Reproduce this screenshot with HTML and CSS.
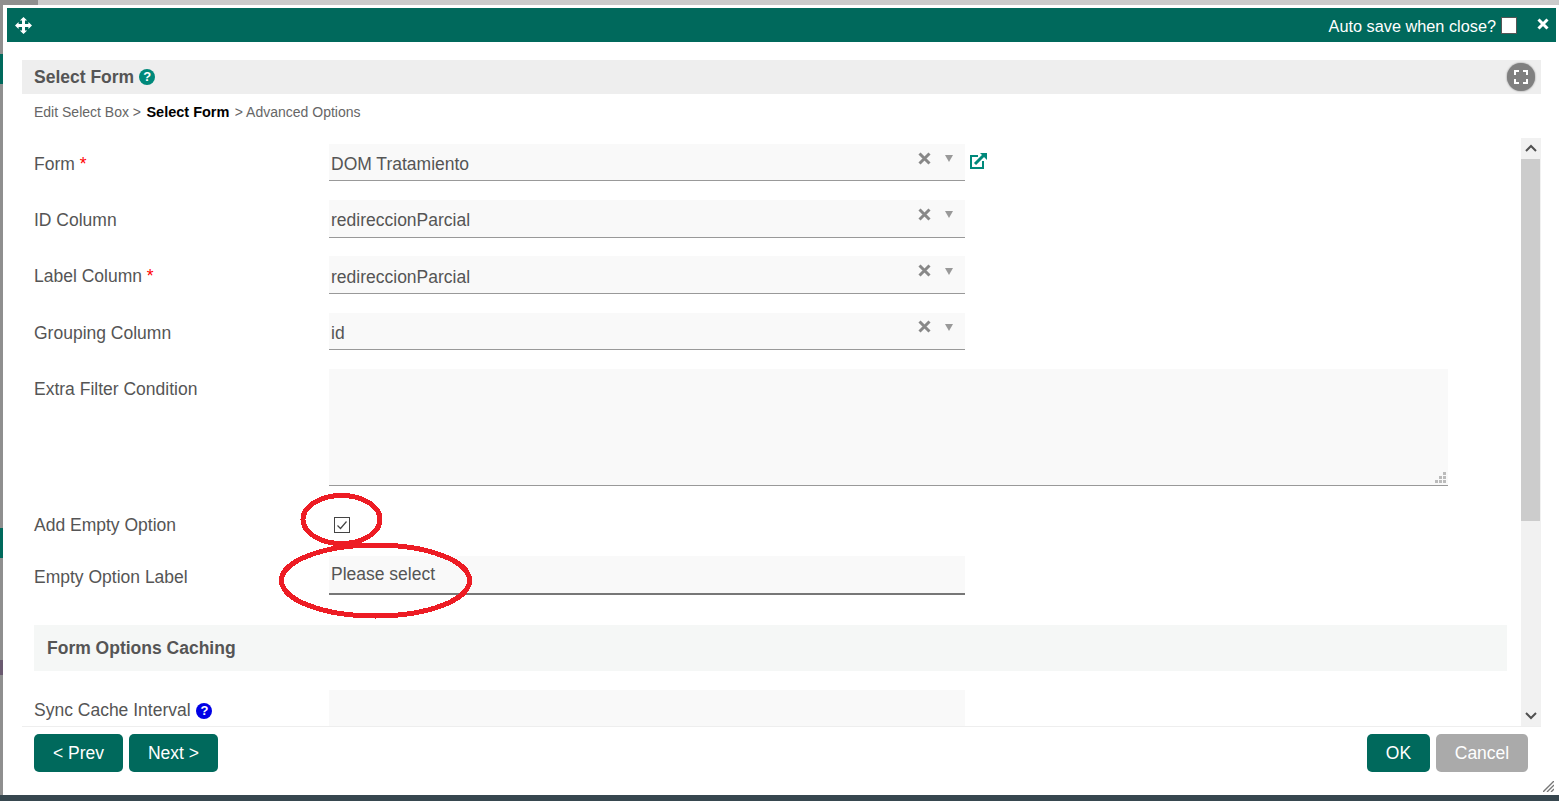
FILE: index.html
```html
<!DOCTYPE html>
<html lang="en">
  <head>
    <meta charset="UTF-8" />
    <title>Select Form</title>
    <link rel="stylesheet" href="styles.css">
  </head>
  <body>
    <div class="dialog">
      <div class="dialog-header">
        <svg class="move-icon" viewBox="0 0 16 16" width="17" height="17">
          <path d="M8 0l3.4 3.4H9.4v3.2h3.2v-2L16 8l-3.4 3.4v-2H9.4v3.2h2L8 16l-3.4-3.4h2V9.4H3.4v2L0 8l3.4-3.4v2h3.2V3.4h-2z" fill="#fff" />
        </svg>
        <span class="autosave">Auto save when close?</span>
        <span class="autosave-box"></span>
        <svg class="close-icon" viewBox="0 0 12 12" width="12" height="12">
          <path d="M1.5 1.5l9 9M10.5 1.5l-9 9" stroke="#fff" stroke-width="3" />
        </svg>
      </div>

      <div class="dialog-body">
        <div class="panel-title">
          <span class="panel-name">Select Form</span>
          <span class="help help-teal">?</span>
          <span class="fullscreen-btn">
            <svg viewBox="0 0 14 14" width="14" height="14">
              <path d="M1 5V1h4M9 1h4v4M13 9v4H9M5 13H1V9" fill="none" stroke="#fff" stroke-width="2" />
            </svg>
          </span>
        </div>

        <div class="breadcrumb">
          Edit Select Box &gt; <b>Select Form</b> &gt; Advanced Options
        </div>

        <div class="form-area">
          <div class="form-scroll">
            <div class="form-row">
              <label class="form-label">Form <span class="required">*</span></label>
              <div class="select-box">
                <span class="select-value">DOM Tratamiento</span>
                <svg class="select-clear" viewBox="0 0 13 13" width="13" height="13">
                  <path d="M1.5 1.5l10 10M11.5 1.5l-10 10" stroke="#888" stroke-width="3" />
                </svg>
                <span class="select-arrow"></span>
              </div>
              <svg class="link-icon" viewBox="0 0 19 18" width="19" height="18">
                <path d="M9 4H2v12h12V9" fill="none" stroke="#00897b" stroke-width="2" />
                <path d="M6 12L15 3" stroke="#00897b" stroke-width="3" />
                <path d="M11 1h7v7z" fill="#00897b" />
              </svg>
            </div>
            <div class="form-row">
              <label class="form-label">ID Column</label>
              <div class="select-box">
                <span class="select-value">redireccionParcial</span>
                <svg class="select-clear" viewBox="0 0 13 13" width="13" height="13">
                  <path d="M1.5 1.5l10 10M11.5 1.5l-10 10" stroke="#888" stroke-width="3" />
                </svg>
                <span class="select-arrow"></span>
              </div>
            </div>
            <div class="form-row">
              <label class="form-label">Label Column <span class="required">*</span></label>
              <div class="select-box">
                <span class="select-value">redireccionParcial</span>
                <svg class="select-clear" viewBox="0 0 13 13" width="13" height="13">
                  <path d="M1.5 1.5l10 10M11.5 1.5l-10 10" stroke="#888" stroke-width="3" />
                </svg>
                <span class="select-arrow"></span>
              </div>
            </div>
            <div class="form-row">
              <label class="form-label">Grouping Column</label>
              <div class="select-box">
                <span class="select-value">id</span>
                <svg class="select-clear" viewBox="0 0 13 13" width="13" height="13">
                  <path d="M1.5 1.5l10 10M11.5 1.5l-10 10" stroke="#888" stroke-width="3" />
                </svg>
                <span class="select-arrow"></span>
              </div>
            </div>
            <div class="form-row row-textarea">
              <label class="form-label">Extra Filter Condition</label>
              <div class="textarea-box"><span class="grip"></span></div>
            </div>
            <div class="form-row row-check">
              <label class="form-label">Add Empty Option</label>
              <span class="check-box">
                <svg viewBox="0 0 16 16" width="16" height="16">
                  <path d="M3.5 8.5l3 3 6-7" fill="none" stroke="#444" stroke-width="1.2" />
                </svg>
              </span>
            </div>
            <div class="form-row row-input">
              <label class="form-label">Empty Option Label</label>
              <div class="text-box">Please select</div>
            </div>
            <div class="section-title">Form Options Caching</div>
            <div class="form-row row-sync">
              <label class="form-label">Sync Cache Interval <span class="help help-blue">?</span></label>
              <div class="text-box plain"></div>
            </div>
          </div>
          <div class="scrollbar">
            <svg class="scroll-arrow" viewBox="0 0 20 21" width="20" height="21">
              <path d="M5 13l5-5 5 5" fill="none" stroke="#505050" stroke-width="2" />
            </svg>
            <div class="scroll-thumb"></div>
            <svg class="scroll-arrow arrow-down" viewBox="0 0 20 21" width="20" height="21">
              <path d="M5 8l5 5 5-5" fill="none" stroke="#505050" stroke-width="2" />
            </svg>
          </div>
        </div>

        <div class="dialog-footer">
          <button class="btn">&lt; Prev</button>
          <button class="btn">Next &gt;</button>
          <span class="footer-space"></span>
          <button class="btn btn-ok">OK</button>
          <button class="btn btn-cancel">Cancel</button>
        </div>
      </div>

      <svg class="resize-grip" viewBox="0 0 11 11" width="11" height="11">
        <path d="M0 11L11 0M4 11l7-7M8 11l3-3" stroke="#777" stroke-width="1.4" />
      </svg>
    </div>
    <div class="page-strip"></div>

    <!-- red marks drawn over the screenshot -->
    <svg class="marks" viewBox="0 0 1559 801" width="1559" height="801">
      <ellipse cx="341.5" cy="519.5" rx="38.5" ry="24" />
      <ellipse cx="375.5" cy="580.5" rx="94" ry="35.5" />
    </svg>
  </body>
</html>
```

FILE: styles.css
```css
:root {
  --green: #00695c;
  --teal: #00897b;
  --text: #555;
  --field: #f9f9f9;
}

* {
  box-sizing: border-box;
}

html,
body {
  height: 801px;
  margin: 0;
  overflow: hidden;
}

body {
  position: relative;
  display: flex;
  flex-direction: column;
  font-family: "Liberation Sans", Arial, sans-serif;
  color: var(--text);
  background:
    linear-gradient(to bottom, transparent 54px, var(--green) 54px, var(--green) 84px, transparent 84px, transparent 528px, var(--green) 528px, var(--green) 558px, transparent 558px, transparent 660px, #6a5a70 660px, #6a5a70 675px, transparent 675px) left / 3px 100% no-repeat,
    linear-gradient(to right, #8f8f8f 38px, #cbcbcb 38px);
}

.dialog {
  position: relative;
  flex: 1;
  margin: 5px 0 0 3px;
  padding: 3px 3px 0 4px;
  background: white;
}

.dialog-header {
  display: flex;
  align-items: center;
  height: 34px;
  padding: 0 6px 0 8px;
  background: var(--green);
  color: white;
}

.move-icon {
  margin-right: auto;
}

.autosave {
  padding-top: 3px;
  font-size: 16.3px;
}

.autosave-box {
  width: 16px;
  height: 17px;
  margin-left: 5px;
  background: white;
  border: 1px solid #555;
}

.close-icon {
  margin: 0 1px 3px 20px;
}

.dialog-body {
  padding: 18px 15px 0;
}

.panel-title {
  display: flex;
  align-items: center;
  height: 34px;
  padding: 0 6px 0 12px;
  background: #eee;
}

.panel-name {
  font-size: 17.5px;
  font-weight: 700;
}

.help {
  display: inline-block;
  width: 16px;
  height: 16px;
  border-radius: 50%;
  color: white;
  font-size: 13px;
  font-weight: 700;
  line-height: 16px;
  text-align: center;
  vertical-align: 1px;
}

.help-teal {
  margin-left: 5px;
  background: var(--teal);
}

.help-blue {
  margin-left: 1px;
  background: #0000e6;
}

.fullscreen-btn {
  display: flex;
  align-items: center;
  justify-content: center;
  width: 28px;
  height: 28px;
  margin-left: auto;
  border-radius: 50%;
  background: #808080;
  box-shadow: 0 0 2px rgba(0, 0, 0, 0.5);
}

.breadcrumb {
  height: 44px;
  padding: 10px 12px 0;
  font-size: 14px;
  line-height: 16px;
  color: #666;
}

.breadcrumb b {
  margin: 0 1.5px;
  font-size: 14.5px;
  color: black;
}

.form-area {
  display: flex;
  height: 589px;
  border-bottom: 1px solid #eee;
}

.form-scroll {
  flex: 1;
  height: 588px;
  padding: 6px 0 0 12px;
  overflow: hidden;
}

.form-row {
  display: flex;
  align-items: flex-start;
  height: 37.4px;
  margin-bottom: 18.8px;
}

.form-label {
  flex: none;
  width: 295px;
  font-size: 17.5px;
  line-height: 40px;
}

.required {
  color: red;
}

.select-box,
.text-box {
  display: flex;
  align-items: center;
  flex: none;
  width: 636px;
  height: 37.4px;
  padding: 5px 2px 0;
  background: var(--field);
  border-bottom: 1px solid #999;
  font-size: 17.5px;
}

.select-value {
  flex: 1;
}

.select-clear {
  margin: 0 14px 13px 0;
}

.select-arrow {
  width: 0;
  height: 0;
  margin: 0 10px 12px 0;
  border: 4.5px solid transparent;
  border-top: 7px solid #999;
  border-bottom: 0;
}

.link-icon {
  margin: 8px 0 0 4px;
}

.row-textarea {
  height: 117px;
  margin-bottom: 19.2px;
}

.textarea-box {
  position: relative;
  width: 1119px;
  height: 117px;
  background: var(--field);
  border-bottom: 1px solid #999;
}

.grip {
  position: absolute;
  right: 2px;
  bottom: 2px;
  width: 11px;
  height: 11px;
  background:
    linear-gradient(#bbb, #bbb) 8px 0 / 3px 3px no-repeat,
    linear-gradient(#bbb, #bbb) 4px 4px / 3px 3px no-repeat,
    linear-gradient(#bbb, #bbb) 8px 4px / 3px 3px no-repeat,
    linear-gradient(#bbb, #bbb) 0 8px / 3px 3px no-repeat,
    linear-gradient(#bbb, #bbb) 4px 8px / 3px 3px no-repeat,
    linear-gradient(#bbb, #bbb) 8px 8px / 3px 3px no-repeat;
}

.row-check {
  align-items: center;
  height: 40px;
  margin-bottom: 11px;
}

.check-box {
  display: block;
  width: 16px;
  height: 16px;
  margin-left: 5px;
  background: white;
  border: 1px solid #444;
}

.check-box svg {
  display: block;
  margin: -1px;
}

.row-input {
  height: 39px;
  margin-bottom: 30px;
}

.row-input .form-label {
  line-height: 42px;
}

.row-input .text-box {
  height: 39px;
  padding-top: 1px;
  border-bottom: 2px solid #777;
}

.text-box.plain {
  border: 0;
}

.section-title {
  width: 1473px;
  height: 46px;
  margin-bottom: 19px;
  padding-left: 13px;
  background: #f5f7f6;
  font-size: 17.5px;
  font-weight: 700;
  line-height: 46px;
}

.scrollbar {
  display: flex;
  flex-direction: column;
  flex: none;
  width: 20px;
  background: #f1f1f1;
}

.scroll-arrow {
  flex: none;
}

.scroll-thumb {
  width: 19px;
  height: 362px;
  background: #ccc;
}

.arrow-down {
  margin-top: auto;
}

.dialog-footer {
  display: flex;
  gap: 6px;
  padding: 7px 13px 0 12px;
}

.footer-space {
  flex: 1;
}

.btn {
  width: 89px;
  height: 38px;
  border: 0;
  border-radius: 5px;
  background: var(--green);
  color: white;
  font-family: inherit;
  font-size: 17.5px;
}

.btn-ok {
  width: 63px;
}

.btn-cancel {
  width: 92px;
  background: #aaa;
}

.resize-grip {
  position: absolute;
  right: 5px;
  bottom: 3px;
}

.page-strip {
  flex: none;
  height: 6px;
  background: #37474f;
}

.marks {
  position: absolute;
  top: 0;
  left: 0;
  pointer-events: none;
  shape-rendering: crispEdges;
}

.marks ellipse {
  fill: none;
  stroke: #ed1c24;
  stroke-width: 5;
}
```
